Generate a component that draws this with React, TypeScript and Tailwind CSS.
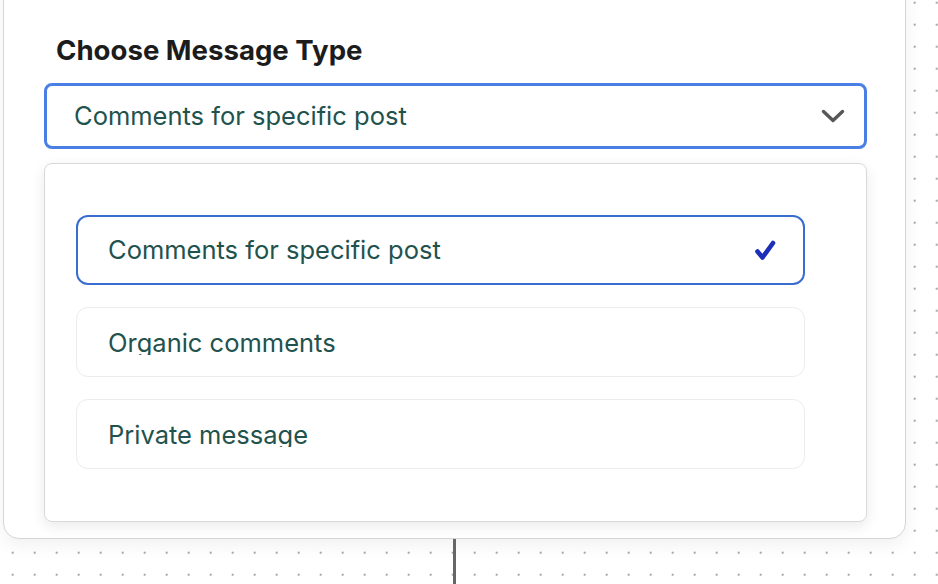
import React from "react";

const textColor = "text-[#22524d]";

function Check() {
  return (
    <svg width="22" height="22" viewBox="0 0 22 22" fill="none">
      <path
        d="M3.5 12.5 L8.5 18.5 L19 4"
        stroke="#1d2fb6"
        strokeWidth="4.6"
        strokeLinecap="round"
        strokeLinejoin="round"
      />
    </svg>
  );
}

function Chevron() {
  return (
    <svg width="24" height="15" viewBox="0 0 24 15" fill="none">
      <path
        d="M2.5 2.5 L12 11.5 L21.5 2.5"
        stroke="#575757"
        strokeWidth="3.4"
        strokeLinecap="round"
        strokeLinejoin="round"
      />
    </svg>
  );
}

export default function App() {
  return (
    <div className="w-[938px] h-[584px] overflow-hidden bg-white bg-[radial-gradient(circle,#a8a8a8_0.9px,transparent_1.4px)] bg-[length:22px_22px] bg-[position:1.7px_-8.3px] font-['Inter','Noto_Sans',sans-serif]">
      <div className="ml-[3px] -mt-[20px] w-[903px] h-[559px] rounded-[16px] border border-[#d6d6d6] bg-white shadow-[0_6px_18px_rgba(0,0,0,0.06)] pl-[40px] pt-[55px]">
        <div className="ml-[12px] text-[27.6px] leading-[28px] font-bold text-[#1c1c1c]">
          Choose Message Type
        </div>
        <div className="mt-[19px] w-[823px] h-[66px] rounded-[8px] border-[3px] border-[#4a80e6] flex items-center justify-between pl-[27px] pr-[19px]">
          <span className={`text-[25.5px] leading-[26px] ${textColor}`}>
            Comments for specific post
          </span>
          <Chevron />
        </div>
        <div className="mt-[14px] w-[823px] h-[359px] rounded-[8px] border border-[#d9d9d9] bg-white shadow-[0_4px_14px_rgba(0,0,0,0.09)] pt-[51px] pl-[31px] flex flex-col gap-[22px]">
          <div className="w-[729px] h-[70px] rounded-[12px] border-2 border-[#3a6dd0] pl-[30px] pr-[27px] flex items-center justify-between">
            <span className={`text-[25.5px] leading-[26px] ${textColor}`}>
              Comments for specific post
            </span>
            <Check />
          </div>
          <div className="w-[729px] h-[70px] rounded-[12px] border border-[#ececec] pl-[31px] pt-[22px]">
            <div className={`h-[25px] overflow-hidden text-[25.5px] leading-[26px] ${textColor}`}>
              Organic comments
            </div>
          </div>
          <div className="w-[729px] h-[70px] rounded-[12px] border border-[#ececec] pl-[31px] pt-[22px]">
            <div className={`h-[25px] overflow-hidden text-[25.5px] leading-[26px] ${textColor}`}>
              Private message
            </div>
          </div>
        </div>
      </div>
      <div className="ml-[453px] w-[3px] h-[60px] bg-[#666666]" />
    </div>
  );
}
